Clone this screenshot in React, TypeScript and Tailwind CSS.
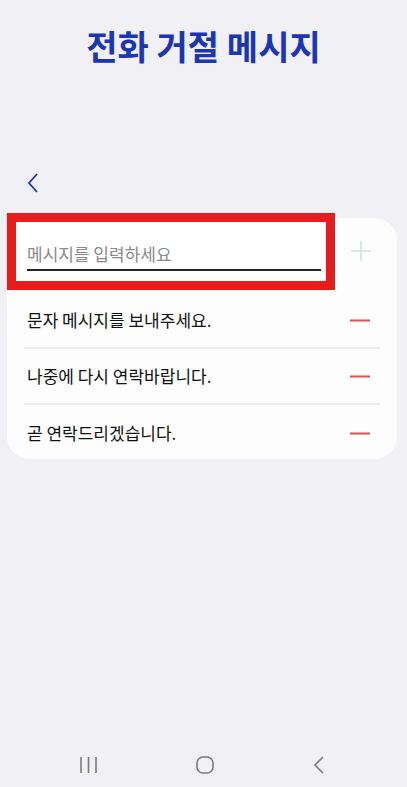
import { useState } from "react";

const font = { fontFamily: '"Noto Sans CJK KR", "Noto Sans", sans-serif' };

const messages = [
  "문자 메시지를 보내주세요.",
  "나중에 다시 연락바랍니다.",
  "곧 연락드리겠습니다.",
];

export default function App() {
  const [text, setText] = useState("");

  return (
    <div
      className="w-[407px] h-[787px] bg-[#f0f0f5] flex flex-col overflow-hidden"
      style={font}
    >
      {/* 제목 */}
      <h1 className="mt-[22px] text-center text-[34px] leading-[48px] font-bold text-[#1a35b5]">
        전화 거절 메시지
      </h1>

      {/* 뒤로 */}
      <button className="ml-[26px] mt-[101px] w-[16px] h-[24px] flex items-center">
        <svg width="14" height="22" viewBox="0 0 14 22" fill="none">
          <path d="M11 2 L3 11 L11 20" stroke="#1a35b5" strokeWidth="1.8" />
        </svg>
      </button>

      {/* 카드 */}
      <div className="relative mt-[23px] ml-[7px] mr-[10px] bg-[#fdfdfd] rounded-[22px]">
        <div className="flex items-start h-[75px]">
          <div className="-mt-[5px] w-[328px] h-[77px] border-[9px] border-[#e81c1c] bg-white pl-[11px] pr-[5px] pt-[18px]">
            <input
              value={text}
              onChange={(e) => setText(e.target.value)}
              placeholder="메시지를 입력하세요"
              className="w-full h-[31px] text-[17px] text-[#222] placeholder:text-[#8a8a8a] border-b-2 border-[#222] outline-none bg-transparent pb-[3px]"
              style={font}
            />
          </div>
          <button className="ml-[15px] mt-[22px] w-[22px] h-[22px] flex items-center justify-center">
            <svg width="22" height="22" viewBox="0 0 22 22">
              <path d="M11 1 V21 M1 11 H21" stroke="#c8e8d9" strokeWidth="1.6" />
            </svg>
          </button>
        </div>

        <ul className="px-[17px]">
          {messages.map((m, i) => (
            <li
              key={m}
              className={`flex items-center justify-between ${
                i < messages.length - 1
                  ? "h-[56px] border-b-2 border-[#ececee]"
                  : "h-[54px] pt-[2px]"
              }`}
            >
              <span className="pl-[3px] text-[17px] text-[#111]">{m}</span>
              <svg width="20" height="3" viewBox="0 0 20 3" className="mr-[10px]">
                <rect width="20" height="2" y="0.5" fill="#d9534f" />
              </svg>
            </li>
          ))}
        </ul>
      </div>

      {/* 하단 내비게이션 */}
      <div className="mt-auto h-[44px] flex items-start justify-between pl-[80px] pr-[83px] pt-[13px]">
        <svg width="17" height="18" viewBox="0 0 17 18">
          <path d="M1 1 V17 M8.5 1 V17 M16 1 V17" stroke="#7a7a7e" strokeWidth="1.6" />
        </svg>
        <svg width="18" height="18" viewBox="0 0 18 18" fill="none">
          <rect x="1" y="1" width="16" height="16" rx="6" stroke="#7a7a7e" strokeWidth="1.6" />
        </svg>
        <svg width="11" height="18" viewBox="0 0 11 18" fill="none">
          <path d="M10 1 L2 9 L10 17" stroke="#7a7a7e" strokeWidth="1.6" />
        </svg>
      </div>
    </div>
  );
}
